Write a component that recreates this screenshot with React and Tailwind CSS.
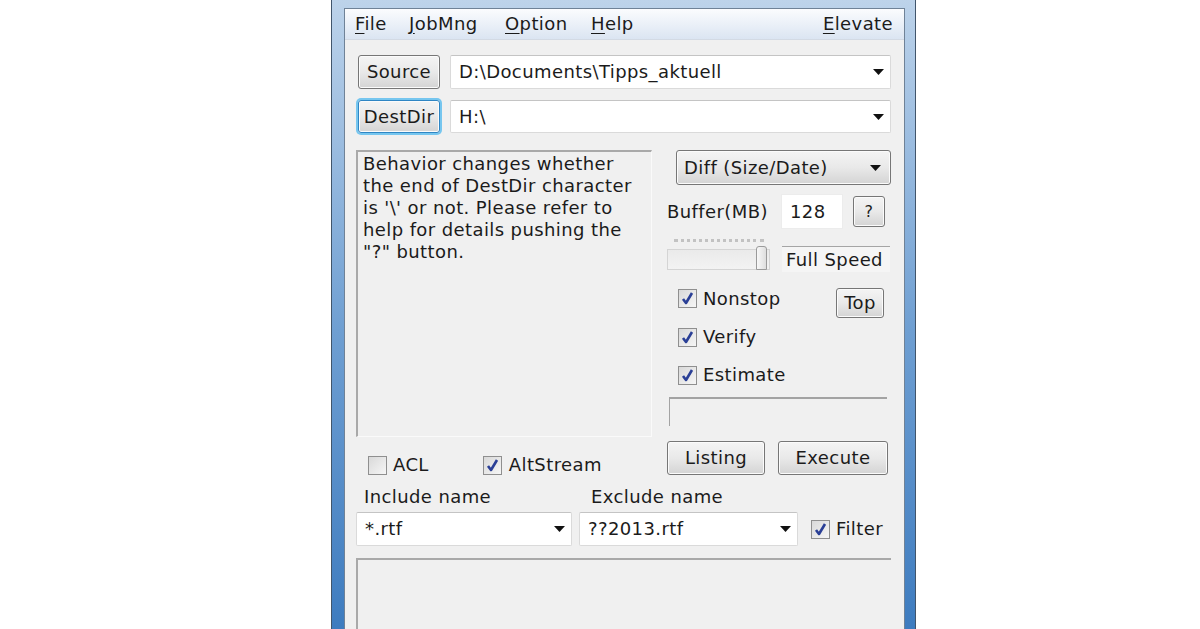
import React from "react";

const Arrow = () => (
  <svg width="11" height="6" viewBox="0 0 11 6" className="shrink-0">
    <path d="M0 0 L11 0 L5.5 6 Z" fill="#111" />
  </svg>
);

const Check = ({ on }) => (
  <span className="w-[19px] h-[19px] shrink-0 border border-[#8f8f8f] bg-gradient-to-br from-[#d9d9d9] to-[#f6f6f6] flex items-center justify-center">
    {on && (
      <svg width="15" height="15" viewBox="0 0 15 15">
        <path d="M3 8 L6 12 L12 2" fill="none" stroke="#2a3f96" strokeWidth="2.6" strokeLinejoin="round" />
      </svg>
    )}
  </span>
);

const Btn = ({ className = "", focus, spread, children }) => (
  <div
    className={
      "flex items-center rounded-[3px] border bg-gradient-to-b from-[#f4f4f4] via-[#e9e9e9] to-[#d4d4d4] shadow-[inset_0_0_0_1px_#fbfbfb] " +
      (spread ? "justify-between " : "justify-center ") +
      (focus
        ? "border-[#2f86c4] ring-2 ring-[#76c6ef] "
        : "border-[#767676] ") +
      className
    }
  >
    {children}
  </div>
);

const Combo = ({ className = "", value }) => (
  <div
    className={
      "flex items-center bg-white border border-[#dadada] border-t-[#c4c4c4] rounded-[2px] pl-[8px] pr-[6px] " +
      className
    }
  >
    <span className="flex-1 truncate">{value}</span>
    <Arrow />
  </div>
);

const Menu = ({ k, rest, className = "" }) => (
  <span className={className}>
    <u className="underline-offset-[3px]">{k}</u>
    {rest}
  </span>
);

export default function App() {
  return (
    <div className="w-[1200px] h-[629px] overflow-hidden bg-white text-[18px] leading-[22px] tracking-[0.4px] text-[#1b1b1b] font-['DejaVu_Sans',sans-serif]">
      <div className="ml-[331px] w-[585px] h-[660px] border-x border-[#41556b] bg-gradient-to-b from-[#bdd3ea] via-[#6f9fd2] to-[#3878bd] pl-[12px] pr-[10px] pt-[8px]">
        <div className="h-full border-x border-t border-[#6f8297] bg-[#f0f0f0]">
          {/* menu */}
          <div className="h-[31px] flex items-center pl-[10px] pr-[11px] bg-gradient-to-b from-[#fbfcfe] to-[#dbe5f2] border-b border-[#d3dae4]">
            <Menu k="F" rest="ile" className="w-[54px]" />
            <Menu k="J" rest="obMng" className="w-[96px]" />
            <Menu k="O" rest="ption" className="w-[86px]" />
            <Menu k="H" rest="elp" />
            <Menu k="E" rest="levate" className="ml-auto" />
          </div>

          <div className="pl-[11px] pr-[13px]">
            {/* source / dest */}
            <div className="flex mt-[15px] ml-[2px]">
              <Btn className="w-[82px] h-[34px]">Source</Btn>
              <Combo className="ml-[10px] w-[441px] h-[34px]" value="D:\Documents\Tipps_aktuell" />
            </div>
            <div className="flex mt-[11px] ml-[2px]">
              <Btn focus className="w-[82px] h-[33px]">DestDir</Btn>
              <Combo className="ml-[10px] w-[441px] h-[33px]" value="H:\" />
            </div>

            {/* middle */}
            <div className="flex mt-[17px]">
              <div className="w-[296px]">
                <div className="h-[287px] border-t-2 border-l-2 border-[#a9a9a9] border-r border-r-[#fafafa] border-b border-b-[#fafafa] pl-[5px] pt-[1px] pr-[4px]">
                  Behavior changes whether the end of DestDir character is '\' or not. Please refer to help for details pushing the "?" button.
                </div>
                <div className="flex items-center mt-[17px] ml-[12px]">
                  <Check />
                  <span className="ml-[6px]">ACL</span>
                  <span className="ml-[54px] flex items-center">
                    <Check on />
                    <span className="ml-[7px]">AltStream</span>
                  </span>
                </div>
              </div>

              <div className="ml-[15px] w-[224px]">
                <Btn spread className="ml-[9px] w-[215px] h-[35px] pl-[7px] pr-[9px]">
                  <span>Diff (Size/Date)</span>
                  <Arrow />
                </Btn>
                <div className="flex items-center mt-[9px]">
                  <span className="w-[114px] whitespace-nowrap">Buffer(MB)</span>
                  <div className="w-[62px] h-[35px] bg-white border border-[#ececec] flex items-center pl-[8px]">128</div>
                  <Btn className="ml-[10px] w-[32px] h-[31px] text-[16px]">?</Btn>
                </div>
                <div className="flex mt-[10px]">
                  <div className="w-[103px]">
                    <div className="h-[5px] ml-[7px] mr-[6px] border-t-[3px] border-dotted border-[#c2c2c2]" />
                    <div className="flex h-[21px] mt-[5px] border border-[#d4d4d4] bg-gradient-to-b from-[#eaeaea] to-[#f3f3f3]">
                      <div className="flex-1" />
                      <div className="w-[11px] -mt-[4px] h-[24px] border border-[#9a9a9a] rounded-t-[3px] bg-gradient-to-r from-[#f8f8f8] to-[#dedede] mr-[2px]" />
                    </div>
                  </div>
                  <div className="ml-[12px] w-[108px] h-[26px] mt-[7px] border-t border-[#a5a5a5] bg-[#f5f5f5] pl-[4px] flex items-center">Full Speed</div>
                </div>
                <div className="flex items-start mt-[16px] ml-[11px] h-[30px]">
                  <span className="mt-[1px]"><Check on /></span>
                  <span className="ml-[6px]">Nonstop</span>
                  <Btn className="ml-auto mr-[7px] w-[48px] h-[30px]">Top</Btn>
                </div>
                <div className="flex items-center mt-[8px] ml-[11px]">
                  <Check on />
                  <span className="ml-[6px]">Verify</span>
                </div>
                <div className="flex items-center mt-[16px] ml-[11px]">
                  <Check on />
                  <span className="ml-[6px]">Estimate</span>
                </div>
                <div className="mt-[11px] ml-[2px] w-[218px] h-[29px] border-t-2 border-l border-[#a3a3a3] bg-[#f0f0f0]" />
                <div className="flex mt-[15px]">
                  <Btn className="w-[98px] h-[34px]">Listing</Btn>
                  <Btn className="ml-[13px] w-[110px] h-[34px]">Execute</Btn>
                </div>
              </div>
            </div>

            {/* include / exclude */}
            <div className="flex mt-[10px]">
              <span className="ml-[8px] w-[227px]">Include name</span>
              <span>Exclude name</span>
            </div>
            <div className="flex items-center mt-[4px]">
              <Combo className="w-[216px] h-[34px]" value="*.rtf" />
              <Combo className="ml-[7px] w-[219px] h-[34px]" value="??2013.rtf" />
              <span className="ml-[13px]"><Check on /></span>
              <span className="ml-[6px]">Filter</span>
            </div>
            <div className="mt-[12px] h-[120px] border-t-2 border-l-2 border-[#a9a9a9] bg-[#f0f0f0]" />
          </div>
        </div>
      </div>
    </div>
  );
}
